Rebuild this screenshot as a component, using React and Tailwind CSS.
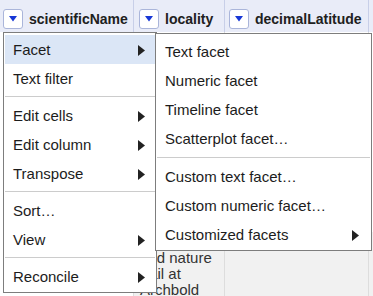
import React from "react";

const mainItems = [
  { label: "Facet", sub: true, active: true },
  { label: "Text filter" },
  { sep: true },
  { label: "Edit cells", sub: true },
  { label: "Edit column", sub: true },
  { label: "Transpose", sub: true },
  { sep: true },
  { label: "Sort…" },
  { label: "View", sub: true },
  { sep: true },
  { label: "Reconcile", sub: true },
];

const facetItems = [
  { label: "Text facet" },
  { label: "Numeric facet" },
  { label: "Timeline facet" },
  { label: "Scatterplot facet…" },
  { sep: true, big: true },
  { label: "Custom text facet…" },
  { label: "Custom numeric facet…" },
  { label: "Customized facets", sub: true },
];

function Arrow() {
  return (
    <svg width="7" height="11" viewBox="0 0 7 11" className="shrink-0">
      <polygon points="0,0 7,5.5 0,11" fill="#222" />
    </svg>
  );
}

function DropButton() {
  return (
    <div className="w-[20px] h-[20px] shrink-0 flex items-center justify-center bg-white border border-[#aab5da] rounded-[3px]">
      <svg width="8" height="6" viewBox="0 0 8 6">
        <polygon points="0,0 8,0 4,5.5" fill="#1737d6" />
      </svg>
    </div>
  );
}

function MenuList({ items, pr }) {
  return items.map((it, i) =>
    it.sep ? (
      <div
        key={i}
        className={
          it.big
            ? "h-px bg-[#cccccc] mt-[4px] mb-[4px]"
            : "h-px bg-[#cccccc] mt-[3px] mb-[4px]"
        }
      />
    ) : (
      <div
        key={i}
        className={
          "h-[29px] flex items-center justify-between pl-[8px] pt-[1px] " +
          pr +
          (it.active ? " bg-[#dbe6f6]" : "")
        }
      >
        <span>{it.label}</span>
        {it.sub && <Arrow />}
      </div>
    )
  );
}

export default function App() {
  return (
    <div className="relative w-[373px] h-[296px] overflow-hidden bg-white font-['Liberation_Sans',Arial,sans-serif] text-[15px] text-[#1c1c1c]">
      {/* header */}
      <div className="flex h-[32px] bg-[#e9ecf8] font-bold text-[14px] text-[#202020]">
        <div className="w-[134px] shrink-0 border-r border-[#c8cfe8] flex items-center gap-[6px] pl-[3px] pt-[6px]">
          <DropButton />
          <span>scientificName</span>
        </div>
        <div className="w-[91px] shrink-0 border-r border-[#c8cfe8] flex items-center gap-[6px] pl-[5px] pt-[6px]">
          <DropButton />
          <span>locality</span>
        </div>
        <div className="w-[144px] shrink-0 border-r border-[#c8cfe8] flex items-center gap-[6px] pl-[4px] pt-[6px]">
          <DropButton />
          <span>decimalLatitude</span>
        </div>
        <div className="flex-1" />
      </div>

      {/* rows */}
      <div className="flex h-[200px] bg-white">
        <div className="w-[134px] shrink-0 border-r border-[#dddddd]" />
        <div className="w-[91px] shrink-0 border-r border-[#dddddd]" />
        <div className="w-[144px] shrink-0 border-r border-[#dddddd]" />
        <div className="flex-1" />
      </div>
      <div className="flex h-[80px]">
        <div className="w-[134px] shrink-0 bg-white border-r border-[#dddddd]" />
        <div className="w-[91px] shrink-0 bg-[#f1f1f1] border-r border-[#dddddd] pl-[6px] pt-[18px] leading-[16px] text-[#333333] whitespace-nowrap">
          <div>and nature</div>
          <div>trail at</div>
          <div>Archbold</div>
        </div>
        <div className="w-[144px] shrink-0 bg-[#f1f1f1] border-r border-[#dddddd]" />
        <div className="flex-1 bg-[#f1f1f1]" />
      </div>

      {/* column menu */}
      <div className="absolute left-[3px] top-[32px] w-[154px] bg-white border border-[#7d7d7d] px-[1px] pt-[2px] pb-[1px]">
        <MenuList items={mainItems} pr="pr-[10px]" />
      </div>

      {/* facet submenu */}
      <div className="absolute left-[155px] top-[33px] w-[217px] bg-white border border-[#7d7d7d] px-[1px] pt-[3px] pb-[1px]">
        <MenuList items={facetItems} pr="pr-[11px]" />
      </div>
    </div>
  );
}
